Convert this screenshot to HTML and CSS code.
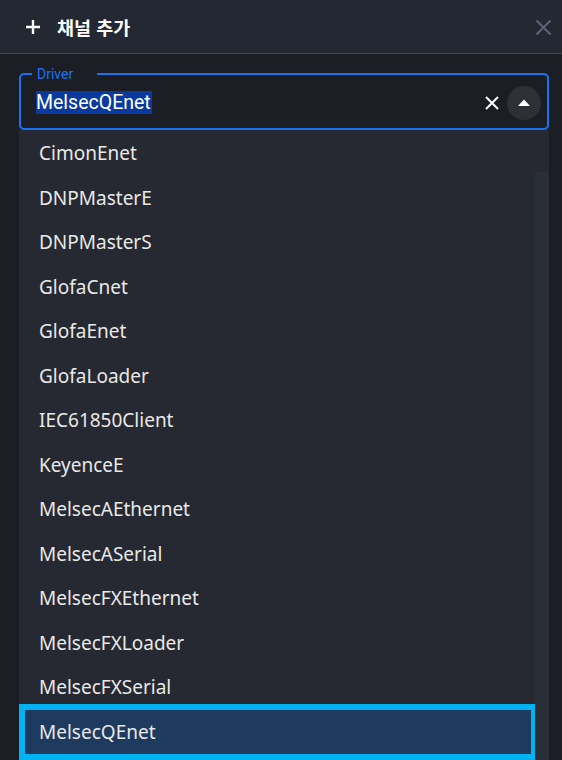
FILE: index.html
```html
<!DOCTYPE html>
<html lang="ko">
<head>
<meta charset="utf-8">
<link rel="stylesheet" href="styles.css">
</head>
<body>
<div class="dialog">
  <header class="head">
    <svg class="plus" width="16" height="16" viewBox="0 0 16 16"><path d="M8 1v14M1 8h14" stroke="#fff" stroke-width="2.4" fill="none"/></svg>
    <h1 class="title">채널 추가</h1>
    <svg class="close" width="17" height="17" viewBox="0 0 17 17"><path d="M1.5 1.5l14 14M15.5 1.5l-14 14" stroke="#5b6579" stroke-width="2" fill="none"/></svg>
  </header>
  <main class="content">
    <fieldset class="field">
      <legend class="legend">Driver</legend>
      <div class="field-row">
        <span class="value"><span class="sel">MelsecQEnet</span></span>
        <svg class="clear" width="14" height="14" viewBox="0 0 14 14"><path d="M1 1l12 12M13 1L1 13" stroke="#fff" stroke-width="2" fill="none"/></svg>
        <span class="toggle"><svg width="12" height="7" viewBox="0 0 12 7"><path d="M0 7L6 0.5 12 7z" fill="#fff"/></svg></span>
      </div>
    </fieldset>
    <div class="dropdown">
      <ul class="list">
        <li class="item">CimonEnet</li>
        <li class="item">DNPMasterE</li>
        <li class="item">DNPMasterS</li>
        <li class="item">GlofaCnet</li>
        <li class="item">GlofaEnet</li>
        <li class="item">GlofaLoader</li>
        <li class="item">IEC61850Client</li>
        <li class="item">KeyenceE</li>
        <li class="item">MelsecAEthernet</li>
        <li class="item">MelsecASerial</li>
        <li class="item">MelsecFXEthernet</li>
        <li class="item">MelsecFXLoader</li>
        <li class="item">MelsecFXSerial</li>
        <li class="item selected">MelsecQEnet</li>
      </ul>
      <div class="track"></div>
    </div>
  </main>
</div>
</body>
</html>
```
FILE: styles.css
```css
html, body {
  margin: 0;
  padding: 0;
  background: #1b1e24;
  overflow: hidden;
}
.dialog {
  width: 562px;
  height: 760px;
  display: flex;
  flex-direction: column;
  background: #1b1e24;
}
.head {
  height: 53px;
  flex: none;
  display: flex;
  align-items: center;
  padding: 0 10px 0 25px;
  background: #232833;
  border-bottom: 1px solid #414957;
}
.plus {
  flex: none;
  margin-top: 1px;
}
.title {
  margin: 0 0 0 16px;
  font-family: "Noto Sans CJK KR", "Noto Sans", sans-serif;
  font-size: 18.5px;
  font-weight: 700;
  color: #ffffff;
  line-height: 24px;
  flex: 1;
}
.close {
  flex: none;
  margin-top: 1px;
}
.content {
  flex: 1;
  display: flex;
  flex-direction: column;
  padding: 12px 13px 0 19px;
  min-height: 0;
}
.field {
  margin: 0;
  padding: 0 6px 4px 15px;
  border: 2px solid #1a73ee;
  border-radius: 5px;
  min-width: 0;
}
.legend {
  margin-left: -4px;
  padding: 0 24px 0 5px;
  font-family: Roboto, "Noto Sans", sans-serif;
  font-size: 14px;
  line-height: 16px;
  color: #1a73ee;
}
.field-row {
  height: 42px;
  display: flex;
  align-items: center;
}
.value {
  flex: 1;
  font-family: Roboto, "Noto Sans", sans-serif;
  font-size: 19.5px;
  color: #ffffff;
  line-height: 22px;
}
.sel {
  background: #0a3a9e;
  padding: 0 1px 0 0;
}
.clear {
  flex: none;
  margin-right: 8px;
}
.toggle {
  width: 34px;
  height: 34px;
  border-radius: 50%;
  background: #2d3035;
  display: flex;
  align-items: center;
  justify-content: center;
  flex: none;
}
.toggle svg {
  margin-top: -2px;
}
.dropdown {
  flex: 1;
  display: flex;
  background: #262931;
  min-height: 0;
}
.list {
  list-style: none;
  margin: 0;
  padding: 1px 4px 0 6px;
  flex: 1;
}
.item {
  height: 44.5px;
  display: flex;
  align-items: center;
  padding-left: 14px;
  font-family: "Noto Sans", "Open Sans", sans-serif;
  font-size: 19px;
  color: #e8e8e8;
}
.item.selected {
  background: #1e3a5f;
  outline: 6px solid #00b2f0;
}
.track {
  width: 14px;
  flex: none;
  margin-top: 42px;
  background: #2a2e36;
}
```
